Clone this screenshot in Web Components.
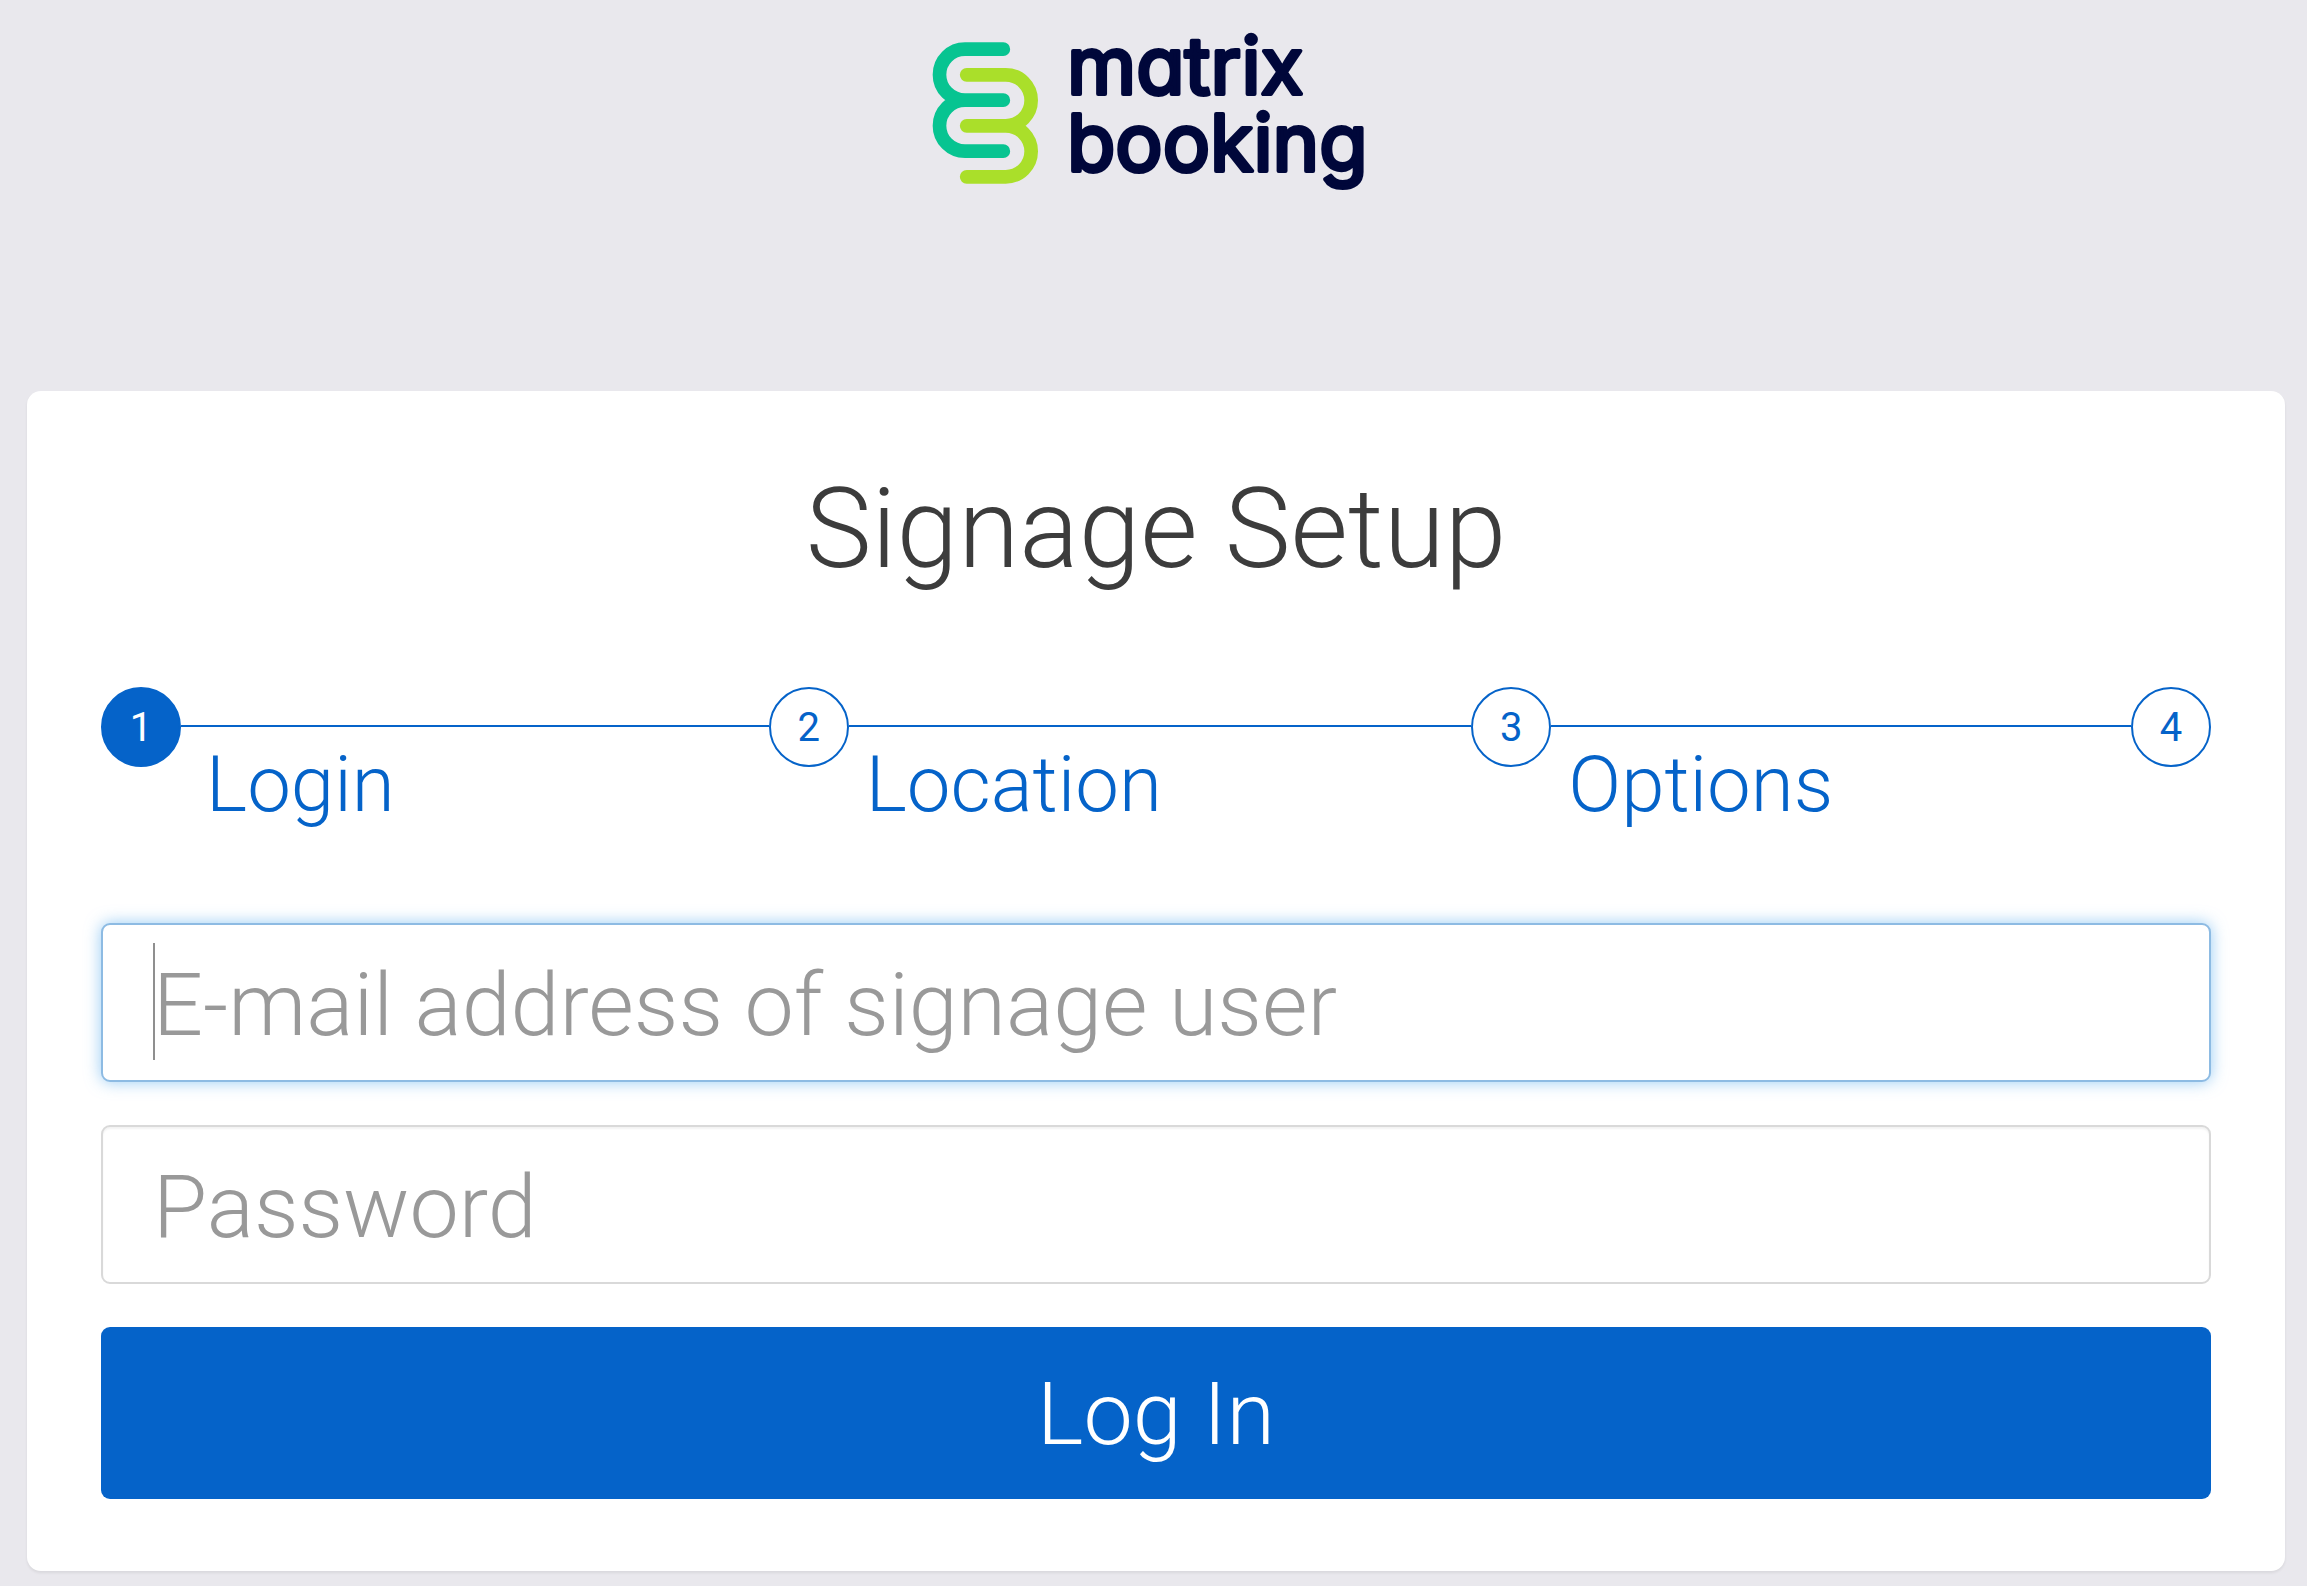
<!DOCTYPE html>
<html lang="en">
<head>
<meta charset="utf-8">
<meta name="viewport" content="width=device-width, initial-scale=1">
<title>Signage Setup</title>
<style>
  :root {
    --brand: #0563c9;
    --navy: #00073a;
    --page: #e9e8ed;
  }
  body {
    margin: 0;
    background: var(--page);
    color: #3c3c3c;
    font-family: Roboto, "Liberation Sans", sans-serif;
    font-weight: 300;
  }
</style>
</head>
<body>
<signage-app></signage-app>

<script>
const define = (name, html, setup) => {
  const template = document.createElement('template');
  template.innerHTML = html;
  customElements.define(name, class extends HTMLElement {
    constructor() {
      super();
      this.attachShadow({ mode: 'open' }).append(template.content.cloneNode(true));
    }
    connectedCallback() {
      if (setup) setup(this, this.shadowRoot);
    }
  });
};

define('brand-logo', `
  <style>
    :host { display: flex; justify-content: center; align-items: flex-start; gap: 26px; }
    svg { flex: none; overflow: visible; }
    .mark { width: 110px; height: 147px; margin-top: 11px; }
    .name {
      width: 312px;
      height: 158px;
      font: 400 79px Inter, sans-serif;
      font-variation-settings: "opsz" 14;
      font-feature-settings: "cv11";
      fill: var(--navy);
      stroke: var(--navy);
      stroke-width: 4px;
      stroke-linejoin: round;
    }
  </style>
  <svg class="mark" viewBox="60 60 330 440" fill="none" stroke-width="41" stroke-linecap="round" aria-hidden="true">
    <path stroke="#07c491" d="M280 87H165a76.500 76.500 0 0 0 0 153H280M165 240a76.500 76.500 0 0 0 0 153H280"/>
    <path stroke="#aadf2a" d="M170 164H287a76.500 76.500 0 0 1 0 153H170M287 317a76.500 76.500 0 0 1 0 153H170"/>
  </svg>
  <svg class="name" viewBox="0 0 312 158"><text x="1" y="65">matrix</text><text x="1" y="142">booking</text></svg>
`);

define('setup-card', `
  <style>
    :host {
      display: block;
      margin: 0 22px 0 27px;
      padding: 78px 74px 72px;
      background: #fff;
      border-radius: 14px;
      box-shadow: 0 2px 3px rgba(0, 0, 0, .07);
    }
    h1 { margin: 0 0 98px; font-size: 111px; line-height: 120px; font-weight: 300; text-align: center; }
  </style>
  <h1><slot name="title"></slot></h1>
  <slot></slot>
`);

define('step-list', `
  <style>
    :host { display: grid; grid-template-columns: 668fr 703fr 660fr 80px; margin-bottom: 98px; }
  </style>
  <slot></slot>
`);

define('step-item', `
  <style>
    :host { display: flex; color: var(--brand); }
    .dot {
      flex: none;
      box-sizing: border-box;
      width: 80px;
      height: 80px;
      border: 2px solid var(--brand);
      border-radius: 50%;
      font-size: 40px;
      line-height: 78px;
      font-weight: 400;
      text-align: center;
    }
    :host([active]) .dot { background: var(--brand); color: #fff; }
    .body { flex: 1; border-top: 2px solid var(--brand); margin-top: 38px; padding: 18px 0 0 17px; }
    :host([active]) .body { padding-left: 25px; }
    :host([last]) .body { display: none; }
    .label { display: block; font-size: 78px; line-height: 80px; }
  </style>
  <div class="dot"></div>
  <div class="body"><span class="label"><slot></slot></span></div>
`, (host, root) => {
  root.querySelector('.dot').textContent = host.getAttribute('number');
});

define('text-field', `
  <style>
    :host { display: block; position: relative; margin-bottom: 43px; }
    input {
      display: block;
      box-sizing: border-box;
      width: 100%;
      height: 159px;
      padding: 4px 50px 0;
      border: 2px solid #d9d9d9;
      border-radius: 9px;
      outline: 0;
      background: #fff;
      box-shadow: inset 0 2px 2px rgba(0, 0, 0, .05);
      color: #3c3c3c;
      caret-color: transparent;
      font: inherit;
      font-size: 88px;
    }
    input::placeholder { color: #999; opacity: 1; }
    .caret { display: none; position: absolute; left: 52px; top: 20px; bottom: 22px; width: 2px; background: #8f8f8f; }
    :host([current]) input { border-color: #8dbbe3; box-shadow: 0 0 16px rgba(82, 168, 236, .6); }
    :host([current]) .caret { display: block; }
  </style>
  <input><span class="caret"></span>
`, (host, root) => {
  const input = root.querySelector('input');
  input.type = host.getAttribute('type');
  input.placeholder = host.getAttribute('label');
  input.setAttribute('aria-label', host.getAttribute('label'));
});

define('primary-button', `
  <style>
    :host { display: block; }
    button {
      display: block;
      width: 100%;
      height: 172px;
      padding: 0;
      border: 0;
      border-radius: 9px;
      background: var(--brand);
      color: #fff;
      font: inherit;
      font-size: 88px;
      cursor: pointer;
    }
  </style>
  <button type="submit"><slot></slot></button>
`);

define('signage-app', `
  <style>
    :host { display: block; padding-bottom: 16px; }
    header { padding: 29px 0 204px; }
    form { margin: 0; }
  </style>
  <header><brand-logo></brand-logo></header>
  <main>
    <setup-card>
      <span slot="title">Signage Setup</span>
      <step-list>
        <step-item number="1" active>Login</step-item>
        <step-item number="2">Location</step-item>
        <step-item number="3">Options</step-item>
        <step-item number="4" last></step-item>
      </step-list>
      <form>
        <text-field type="email" label="E-mail address of signage user" current></text-field>
        <text-field type="password" label="Password"></text-field>
        <primary-button>Log In</primary-button>
      </form>
    </setup-card>
  </main>
`);
</script>
</body>
</html>
